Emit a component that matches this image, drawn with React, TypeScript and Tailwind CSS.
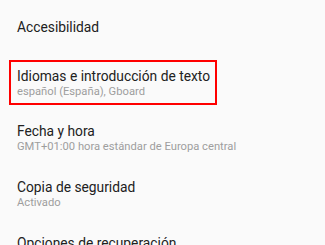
import React from 'react';

interface SettingRow {
  title: string;
  summary?: string;
  highlighted?: boolean;
}

const rows: SettingRow[] = [
  { title: 'Idiomas e introducción de texto', summary: 'español (España), Gboard', highlighted: true },
  { title: 'Fecha y hora', summary: 'GMT+01:00 hora estándar de Europa central' },
  { title: 'Copia de seguridad', summary: 'Activado' },
  { title: 'Opciones de recuperación', summary: 'Restablecer' },
];

const RowText: React.FC<{ row: SettingRow }> = ({ row }) => (
  <>
    <div className="text-[13.8px] leading-[18px] text-[#212121]">{row.title}</div>
    {row.summary && (
      <div className="text-[11.2px] leading-[14px] text-[#9e9e9e]">{row.summary}</div>
    )}
  </>
);

export default function App() {
  return (
    <div
      className="w-[325px] h-[245px] overflow-hidden bg-[#fafafa]"
      style={{ fontFamily: 'Roboto, "Noto Sans", sans-serif' }}
    >
      {/* single-line row at the top */}
      <div className="px-[17px] py-[18px]">
        <div className="text-[13.8px] leading-[18px] text-[#212121]">Accesibilidad</div>
      </div>

      {rows.map((row) =>
        row.highlighted ? (
          <div key={row.title} className="pl-[9px] pt-[6px] pb-[5px]">
            <div className="inline-block border-2 border-[#ff0000] pl-[6px] pr-[5px] pt-[5px] pb-[4px]">
              <RowText row={row} />
            </div>
          </div>
        ) : (
          <div key={row.title} className="px-[17px] py-[12px]">
            <RowText row={row} />
          </div>
        )
      )}
    </div>
  );
}
